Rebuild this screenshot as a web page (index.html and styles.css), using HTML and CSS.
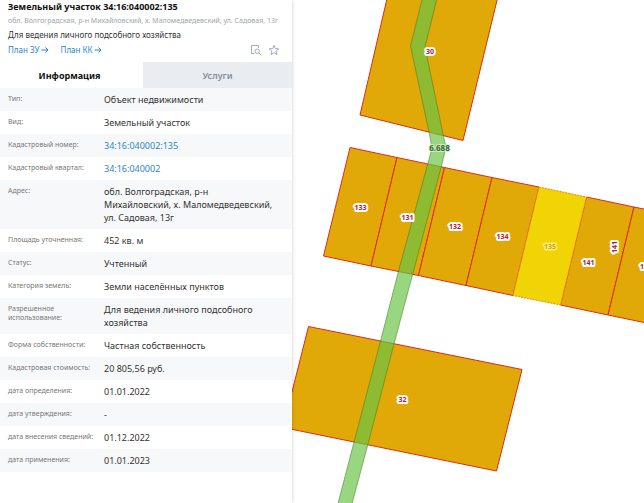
FILE: index.html
```html
<!DOCTYPE html>
<html lang="ru">
<head>
<meta charset="utf-8">
<meta name="viewport" content="width=device-width, initial-scale=1">
<title>Земельный участок 34:16:040002:135</title>
<link rel="stylesheet" href="styles.css">
</head>
<body>
<div class="app">
  <aside class="panel">
    <header class="head">
      <h1 class="title">Земельный участок 34:16:040002:135</h1>
      <p class="address">обл. Волгоградская, р-н Михайловский, х. Маломедведевский, ул. Садовая, 13г</p>
      <p class="usage">Для ведения личного подсобного хозяйства</p>
      <div class="actions">
        <a class="plan" href="#zu">План ЗУ<svg class="arrow" viewBox="0 0 8 8" aria-hidden="true"><path d="M0.5 4H7M4.5 1.5L7 4L4.5 6.5"/></svg></a>
        <a class="plan" href="#kk">План КК<svg class="arrow" viewBox="0 0 8 8" aria-hidden="true"><path d="M0.5 4H7M4.5 1.5L7 4L4.5 6.5"/></svg></a>
        <span class="tools">
          <button class="tool" type="button" aria-label="Показать на карте"><svg viewBox="0 0 12 12" aria-hidden="true"><path d="M4.5 9.500H1.500V1.500H8.500V4"/><circle cx="7.200" cy="7.200" r="2.200"/><path d="M8.800 8.800L11.300 11.300"/></svg></button>
          <button class="tool" type="button" aria-label="В избранное"><svg viewBox="0 0 12 12" aria-hidden="true"><path d="M6 1.400L7.300 4.600L10.800 4.900L8.100 7.100L9 10.600L6 8.700L3 10.600L3.900 7.100L1.200 4.900L4.700 4.600Z"/></svg></button>
        </span>
      </div>
    </header>
    <nav class="tabs">
      <button class="tab tab-active" type="button">Информация</button>
      <button class="tab" type="button">Услуги</button>
    </nav>
    <dl class="info">
      <div class="row"><dt>Тип:</dt><dd>Объект недвижимости</dd></div>
      <div class="row"><dt>Вид:</dt><dd>Земельный участок</dd></div>
      <div class="row"><dt>Кадастровый номер:</dt><dd><a href="#parcel">34:16:040002:135</a></dd></div>
      <div class="row"><dt>Кадастровый квартал:</dt><dd><a href="#quarter">34:16:040002</a></dd></div>
      <div class="row"><dt>Адрес:</dt><dd>обл. Волгоградская, р-н Михайловский, х. Маломедведевский, ул. Садовая, 13г</dd></div>
      <div class="row"><dt>Площадь уточненная:</dt><dd>452 кв. м</dd></div>
      <div class="row"><dt>Статус:</dt><dd>Учтенный</dd></div>
      <div class="row"><dt>Категория земель:</dt><dd>Земли населённых пунктов</dd></div>
      <div class="row"><dt>Разрешенное использование:</dt><dd>Для ведения личного подсобного хозяйства</dd></div>
      <div class="row"><dt>Форма собственности:</dt><dd>Частная собственность</dd></div>
      <div class="row"><dt>Кадастровая стоимость:</dt><dd>20 805,56 руб.</dd></div>
      <div class="row"><dt>дата определения:</dt><dd>01.01.2022</dd></div>
      <div class="row"><dt>дата утверждения:</dt><dd>-</dd></div>
      <div class="row"><dt>дата внесения сведений:</dt><dd>01.12.2022</dd></div>
      <div class="row"><dt>дата применения:</dt><dd>01.01.2023</dd></div>
    </dl>
  </aside>
  <main class="map">
    <svg class="plot" viewBox="292 0 352 503" preserveAspectRatio="xMinYMin slice" role="img" aria-label="Кадастровая карта">
      <g class="parcel">
        <path d="M389 -10L360 115L463 140.500L499.500 -10Z"/>
        <path d="M350 147.500L397 157.500L371 266L323.500 256Z"/>
        <path d="M397 157.500L444.500 167.500L418.500 275.500L371 266Z"/>
        <path d="M444.500 167.500L492 177.500L466 285.500L418.500 275.500Z"/>
        <path d="M492 177.500L539 187L513 295.500L466 285.500Z"/>
        <path d="M586.500 197L634 207L608 315L560.500 305Z"/>
        <path d="M634 207L682 217L656 325L608 315Z"/>
        <path d="M308.500 326.500L522 369.500L496.500 471L283 427.500Z"/>
      </g>
      <path class="selected" d="M539 187L586.500 197L560.500 305L513 295.500Z"/>
      <path class="zone" d="M424.500 -10L410.500 46L429 132L432 148L428 163L398.500 271L380.500 341L354 442L335 515H349L368 444L394 344L413 273L442 164L446 147L443 134L425 47L439 -10Z"/>
      <g class="label">
        <text x="430" y="54">30</text>
        <text x="360.500" y="209.500">133</text>
        <text x="407.500" y="219.500">131</text>
        <text x="455" y="229">132</text>
        <text x="502.500" y="239">134</text>
        <text x="588.500" y="265">141</text>
        <text transform="translate(617 247) rotate(-90)">141</text>
        <text x="646" y="268.500">137</text>
        <text x="402.500" y="401.500">32</text>
        <text class="label-selected" x="550" y="249">135</text>
        <text class="label-zone" x="439.500" y="151">6.688</text>
      </g>
    </svg>
  </main>
</div>
</body>
</html>
```
FILE: styles.css
```css
* {
  box-sizing: border-box;
}

body {
  margin: 0;
  background: #fff;
  color: #333;
  font-family: "Noto Sans", "Open Sans", sans-serif;
  font-size: 9px;
}

h1,
p,
dl,
dd {
  margin: 0;
}

a {
  color: #2a86c8;
  text-decoration: none;
}

button {
  border: 0;
  font-family: inherit;
  cursor: pointer;
}

.app {
  display: flex;
  min-height: 100vh;
}

.panel {
  position: relative;
  z-index: 1;
  flex: 0 0 292px;
  background: #fff;
  box-shadow: 0 0 4px rgba(0, 0, 0, 0.2);
}

.head {
  padding: 0 12px 4px 8px;
  white-space: nowrap;
}

.title {
  color: #111;
  font-size: 9px;
  font-weight: 700;
  line-height: 14px;
}

.address {
  color: #a0a5ae;
  font-size: 7px;
  line-height: 14px;
}

.usage {
  font-size: 8px;
  line-height: 13px;
}

.actions {
  display: flex;
  align-items: center;
  gap: 12px;
  height: 17px;
}

.plan {
  display: flex;
  align-items: center;
  gap: 1px;
  font-size: 8px;
}

.arrow {
  width: 8px;
  height: 8px;
  fill: none;
  stroke: currentColor;
}

.tools {
  display: flex;
  gap: 6px;
  margin-left: auto;
}

.tool {
  width: 12px;
  height: 12px;
  padding: 0;
  background: none;
}

.tool svg {
  display: block;
  fill: none;
  stroke: #a3aab8;
}

.tabs {
  display: grid;
  grid-template-columns: 49fr 51fr;
}

.tab {
  height: 26px;
  padding: 0;
  background: #e9edf2;
  color: #858c98;
  font-size: 9px;
  font-weight: 600;
}

.tab-active {
  padding-right: 4px;
  background: #fff;
  color: #111;
  font-weight: 700;
}

.row {
  display: grid;
  grid-template-columns: 88px 1fr;
  column-gap: 8px;
  padding: 5px 16px 5px 8px;
}

.row:nth-child(odd) {
  background: #f7f8fa;
}

dt {
  color: #777;
  font-size: 7px;
  line-height: 9px;
  padding-top: 1px;
}

dd {
  line-height: 13px;
}

.map {
  flex: 1;
  position: relative;
  min-width: 0;
  overflow: hidden;
}

.plot {
  position: absolute;
  width: 100%;
  height: 100%;
}

.parcel {
  fill: #e0a908;
  stroke: #df2a1c;
}

.selected {
  fill: #f0d406;
  stroke: #ea8a0a;
  stroke-dasharray: 2 1;
}

.zone {
  fill: #6ac447;
  fill-opacity: 0.69;
  stroke: #3c7814;
  stroke-opacity: 0.5;
}

.label {
  fill: #b01c38;
  stroke: #fff;
  stroke-width: 4;
  stroke-linejoin: round;
  paint-order: stroke;
  font-size: 7px;
  font-weight: 700;
  text-anchor: middle;
}

.label-selected {
  fill: #d3a210;
  stroke: #f8ef7c;
  stroke-width: 3;
}

.label-zone {
  fill: #2c6b1c;
  stroke: #d4edca;
  stroke-width: 2;
  font-size: 8px;
}
```
